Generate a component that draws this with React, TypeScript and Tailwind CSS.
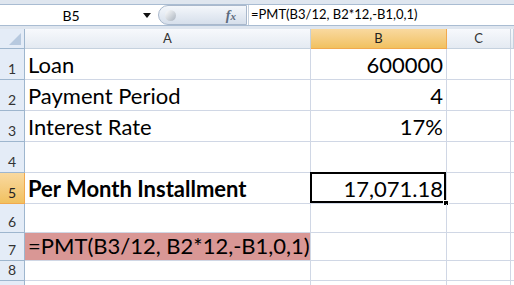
import React from 'react';

// Simple spreadsheet view: formula bar + grid with the PMT example
const cols = ['A', 'B', 'C', ''];

interface IRow {
  n: number;
  h: string;
  a?: string;
  b?: string;
  bold?: boolean;
  pink?: boolean;
}

const rows: IRow[] = [
  { n: 1, h: 'h-[31px]', a: 'Loan', b: '600000' },
  { n: 2, h: 'h-[31px]', a: 'Payment Period', b: '4' },
  { n: 3, h: 'h-[31px]', a: 'Interest Rate', b: '17%' },
  { n: 4, h: 'h-[31px]' },
  { n: 5, h: 'h-[31px]', a: 'Per Month Installment', b: '17,071.18', bold: true },
  { n: 6, h: 'h-[29px]' },
  { n: 7, h: 'h-[28px]', a: '=PMT(B3/12, B2*12,-B1,0,1)', pink: true },
  { n: 8, h: 'h-[20px]' },
];

const FormulaBar = () => (
  <div className="h-[29px] bg-[#dfe6ef] pt-[4px]">
    <div className="flex h-[22px] border-y border-[#a9bcd2] bg-white">
      {/* Name box */}
      <div className="relative flex w-[158px] items-center justify-center text-[14px] text-black">
        <span className="-ml-[16px]">B5</span>
        <svg className="absolute right-[7px] top-[8px]" width="8" height="5" viewBox="0 0 8 5">
          <path d="M0 0 L8 0 L4 5 Z" fill="#111" />
        </svg>
      </div>
      {/* fx pill */}
      <div className="relative flex w-[89px] items-center justify-end rounded-l-full border border-[#a9b8cc] bg-gradient-to-b from-[#f4f7fb] to-[#d6dfeb] pr-[10px]">
        <div className="absolute left-[6px] top-[4px] h-[11px] w-[11px] rounded-full bg-gradient-to-br from-[#ffffff] to-[#aab3be]" />
        <span className="font-['Liberation_Serif',serif] text-[14px] italic font-bold text-[#5d6b7d]">
          f<span className="text-[11px]">x</span>
        </span>
      </div>
      <div className="w-[2px] border-r border-[#c5d1de]" />
      <div className="flex items-center pl-[2px] text-[13px] text-black">=PMT(B3/12, B2*12,-B1,0,1)</div>
    </div>
  </div>
);

const App = () => {
  return (
    <div className="h-[285px] w-[514px] overflow-hidden bg-white font-['Lato',sans-serif]">
      <FormulaBar />
      <div className="grid grid-cols-[25px_286px_136px_64px_1fr]">
        {/* Header row */}
        <div className="relative h-[20px] border-r border-b border-[#9eb6ce] bg-[#e4ecf7]">
          <svg className="absolute bottom-[3px] right-[3px]" width="12" height="12" viewBox="0 0 12 12">
            <path d="M12 0 L12 12 L0 12 Z" fill="#b7c9df" />
          </svg>
        </div>
        {cols.map((c) => (
          <div
            key={c || 'x'}
            className={`flex h-[20px] items-center justify-center border-r border-b text-[13px] ${
              c === 'B'
                ? 'border-[#f1a94e] bg-gradient-to-b from-[#f9d99f] to-[#f1c15f] text-[#222]'
                : 'border-[#c5d1de] bg-gradient-to-b from-[#f7f9fc] to-[#e4eaf2] text-[#333]'
            }`}
          >
            {c}
          </div>
        ))}

        {rows.map((r) => (
          <React.Fragment key={r.n}>
            <div
              className={`${r.h} flex items-end justify-center border-r border-b pb-[3px] text-[14px] leading-none ${
                r.n === 5
                  ? 'border-[#f1a94e] bg-gradient-to-b from-[#f9d99f] to-[#f1c15f] text-[#222]'
                  : 'border-[#9eb6ce] bg-[#e4ecf7] text-[#333]'
              }`}
            >
              {r.n}
            </div>
            <div
              className={`${r.h} flex items-end whitespace-nowrap border-r border-b border-[#d0d7e5] pl-[3px] pb-[3px] text-[22px] leading-none text-black ${
                r.pink ? 'bg-[#d99795]' : ''
              } ${r.bold ? 'font-bold' : ''}`}
            >
              {r.a}
            </div>
            <div
              className={`${r.h} relative flex items-end justify-end border-r border-b border-[#d0d7e5] pr-[3px] pb-[3px] text-[22px] leading-none text-black`}
            >
              {r.b}
              {r.n === 5 && (
                <>
                  <div className="pointer-events-none absolute -left-[1px] -top-[1px] bottom-0 right-0 border-2 border-black" />
                  <div className="absolute -bottom-[3px] -right-[3px] h-[6px] w-[6px] border border-white bg-black" />
                </>
              )}
            </div>
            <div className={`${r.h} border-r border-b border-[#d0d7e5]`} />
            <div className={`${r.h} border-b border-[#d0d7e5]`} />
          </React.Fragment>
        ))}
        {/* partly visible row 9 */}
        <div className="h-[20px] border-r border-[#9eb6ce] bg-[#e4ecf7]" />
        <div className="h-[20px] border-r border-[#d0d7e5]" />
        <div className="h-[20px] border-r border-[#d0d7e5]" />
        <div className="h-[20px] border-r border-[#d0d7e5]" />
        <div className="h-[20px]" />
      </div>
    </div>
  );
};

export default App;
